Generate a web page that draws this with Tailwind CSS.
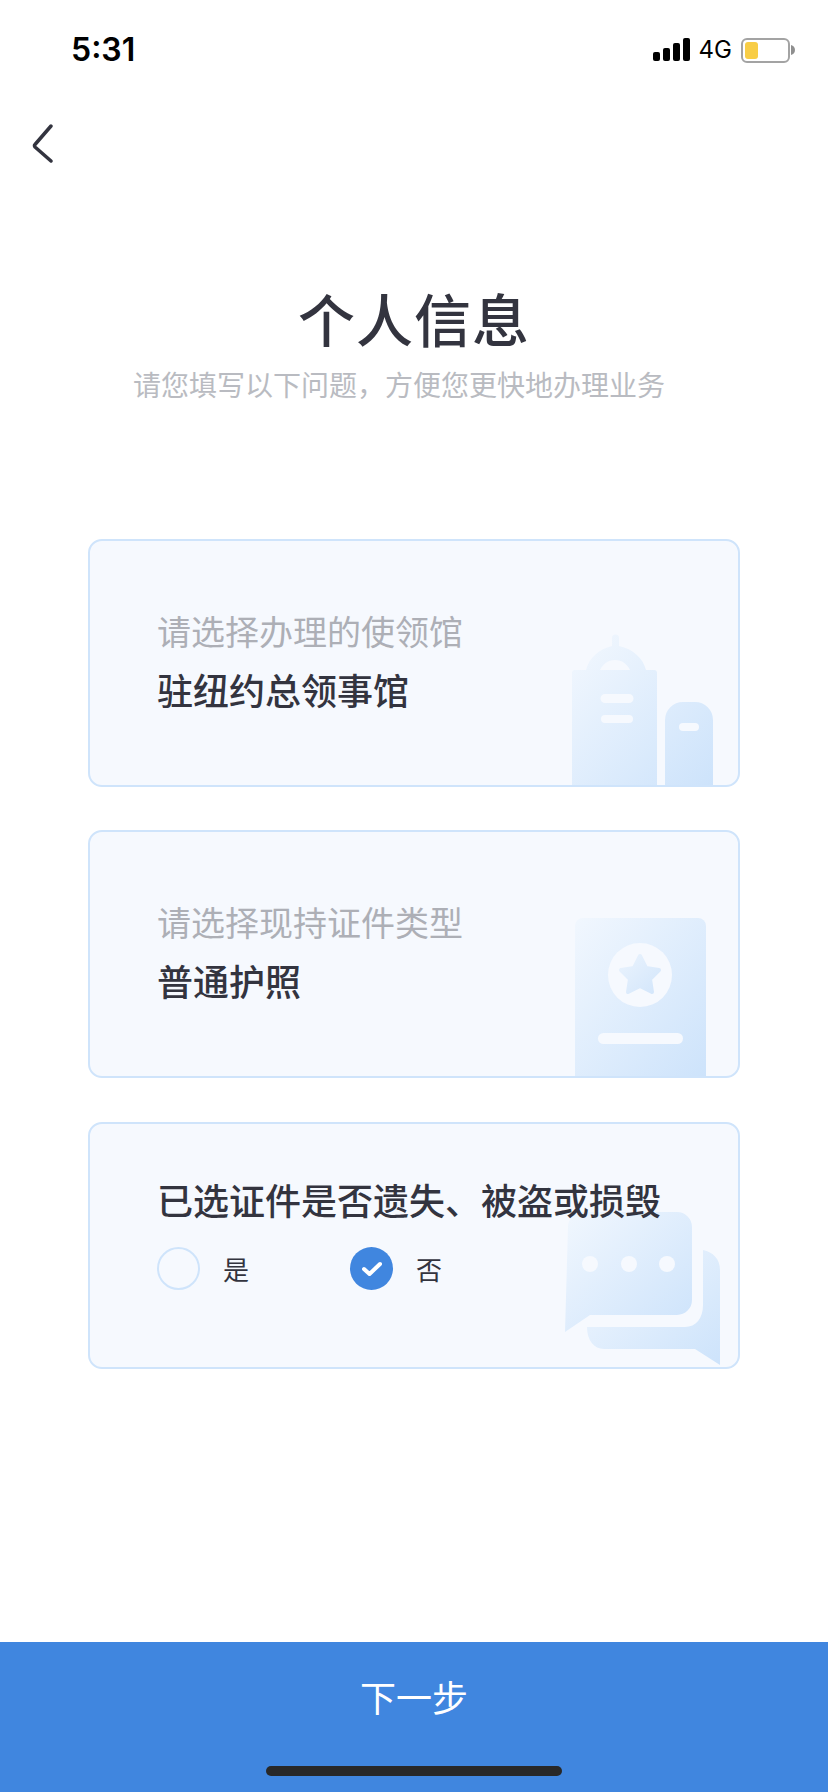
<!DOCTYPE html>
<html lang="zh-CN">
<head>
    <meta charset="UTF-8">
    <meta name="viewport" content="width=device-width, initial-scale=1.0">
    <title>个人信息</title>
    <script src="https://cdn.jsdelivr.net/npm/@tailwindcss/browser@4"></script>
</head>
<body class="bg-white font-['Noto_Sans_CJK_SC','Noto_Sans',sans-serif] text-[#33343f]">

    <main class="flex flex-col w-[828px] h-[1792px] overflow-hidden">

        <!-- 状态栏 -->
        <header class="flex items-center justify-between h-[100px] pl-[71px] pr-[33px] shrink-0">
            <span class="font-['Inter',sans-serif] font-semibold text-[32px] leading-none text-black">5:31</span>
            <div class="flex items-center">
                <svg width="37" height="24" viewBox="0 0 37 24" fill="#000">
                    <rect x="0" y="14" width="7" height="9" rx="2"/>
                    <rect x="10" y="10" width="7" height="13" rx="2"/>
                    <rect x="20" y="5" width="7" height="18" rx="2"/>
                    <rect x="30" y="0" width="7" height="23" rx="2"/>
                </svg>
                <span class="ml-[9px] font-['Inter',sans-serif] text-[24px] leading-none text-black">4G</span>
                <div class="relative ml-[9px] w-[49px] h-[25px] border-2 border-[#a3a3a3] rounded-[6px] p-[2px]">
                    <div class="w-[13px] h-full bg-[#f8cd46] rounded-[3px]"></div>
                </div>
                <svg class="ml-[1px]" width="4" height="10" viewBox="0 0 4 10" fill="#8f8f8f"><path d="M0 0c2.5.6 4 2.6 4 5s-1.500 4.400-4 5z"/></svg>
            </div>
        </header>

        <!-- 返回 -->
        <div class="h-[60px] pl-[30px] pt-[24px] shrink-0">
            <svg width="26" height="40" viewBox="0 0 26 40" fill="none" stroke="#33343f" stroke-width="3.500" stroke-linecap="round" stroke-linejoin="round">
                <path d="M21 2 L5 20.500 Q4 21.500 5 23 L21 37"/>
            </svg>
        </div>

        <!-- 标题 -->
        <section class="text-center mt-[117px] shrink-0">
            <h1 class="text-[57px] leading-[80px] font-medium tracking-[1px]">个人信息</h1>
            <p class="text-[28px] leading-[40px] text-[#b9bbc1] mt-[7px] pr-[30px]">请您填写以下问题&#xFF0C;方便您更快地办理业务</p>
        </section>

        <!-- 表单卡片 -->
        <section class="flex flex-col gap-[43px] mx-[88px] mt-[135px] shrink-0">

            <div class="relative h-[248px] bg-[#f6f9fe] border-2 border-[#cfe4fb] rounded-[14px] pl-[67px] pt-[66px] overflow-hidden">
                <p class="relative text-[34px] leading-[48px] text-[#adafb6]">请选择办理的使领馆</p>
                <p class="relative text-[36px] leading-[50px] font-medium mt-[9px]">驻纽约总领事馆</p>
                <svg class="absolute left-[450px] top-[69px]" width="220" height="190" viewBox="0 0 220 190">
                    <defs>
                        <linearGradient id="g1" x1="0" y1="0" x2="1" y2="1">
                            <stop offset="0" stop-color="#f3f8fe"/>
                            <stop offset="1" stop-color="#cde3fb"/>
                        </linearGradient>
                    </defs>
                    <path fill="url(#g1)" fill-rule="evenodd" d="M72 36 V28 a3.500 3.500 0 0 1 7 0 V36 C93 39 103 48 106 60 H114 a3 3 0 0 1 3 3 V175 H32 V63 a3 3 0 0 1 3 -3 H46 C49 48 59 39 72 36 Z M60 60 H90 C87 54 82 50 75 50 C68 50 63 54 60 60 Z M65 84 a4.500 4.500 0 0 0 0 9 H89 a4.500 4.500 0 0 0 0 -9 Z M65 105 a4 4 0 0 0 0 8 H89 a4 4 0 0 0 0 -8 Z M143 92 H155 a18 18 0 0 1 18 18 V175 H125 V110 a18 18 0 0 1 18 -18 Z M143 113 a4 4 0 0 0 0 8 H155 a4 4 0 0 0 0 -8 Z"/>
                </svg>
            </div>

            <div class="relative h-[248px] bg-[#f6f9fe] border-2 border-[#cfe4fb] rounded-[14px] pl-[67px] pt-[66px] overflow-hidden">
                <p class="relative text-[34px] leading-[48px] text-[#adafb6]">请选择现持证件类型</p>
                <p class="relative text-[36px] leading-[50px] font-medium mt-[9px]">普通护照</p>
                <svg class="absolute left-[450px] top-[68px]" width="220" height="190" viewBox="0 0 220 190">
                    <defs>
                        <linearGradient id="g2" x1="0" y1="0" x2="1" y2="1">
                            <stop offset="0" stop-color="#f1f7fe"/>
                            <stop offset="1" stop-color="#cde3fb"/>
                        </linearGradient>
                        <linearGradient id="g2s" x1="0" y1="0" x2="1" y2="1">
                            <stop offset="0" stop-color="#eaf3fd"/>
                            <stop offset="1" stop-color="#d3e6fb"/>
                        </linearGradient>
                    </defs>
                    <path fill="url(#g2)" d="M43 18 H158 a8 8 0 0 1 8 8 V177 H35 V26 a8 8 0 0 1 8 -8 Z"/>
                    <circle cx="100" cy="75" r="32" fill="#f6f9fe"/>
                    <path fill="url(#g2s)" stroke="url(#g2s)" stroke-width="4" stroke-linejoin="round" d="M100 56 L106 68 L119 70 L110 79 L112 92 L100 86 L88 92 L90 79 L81 70 L94 68 Z"/>
                    <rect x="58" y="133" width="85" height="11" rx="5.500" fill="#f6f9fe"/>
                </svg>
            </div>

            <div class="relative h-[247px] mt-px bg-[#f6f9fe] border-2 border-[#cfe4fb] rounded-[14px] pl-[67px] pt-[50px] overflow-hidden">
                <svg class="absolute left-[450px] top-[66px]" width="220" height="190" viewBox="0 0 220 190">
                    <defs>
                        <linearGradient id="g3" x1="0" y1="0" x2="1" y2="1">
                            <stop offset="0" stop-color="#f1f7fe"/>
                            <stop offset="1" stop-color="#cde3fb"/>
                        </linearGradient>
                    </defs>
                    <path fill="url(#g3)" d="M42 22 H137 a15 15 0 0 1 15 15 V110 a15 15 0 0 1 -15 15 H50 L25 142 L28 37 a15 15 0 0 1 14 -15 Z"/>
                    <path fill="url(#g3)" d="M163 60 C173 62 180 69 180 80 V175 L155 159 H64 C54 159 47 150 47 137 H145 C156 137 163 128 163 115 Z"/>
                    <circle cx="50" cy="74" r="8" fill="#f6f9fe"/>
                    <circle cx="89" cy="74" r="8" fill="#f6f9fe"/>
                    <circle cx="127" cy="74" r="8" fill="#f6f9fe"/>
                </svg>
                <p class="relative text-[36px] leading-[50px] font-medium whitespace-nowrap">已选证件是否遗失、被盗或损毁</p>
                <div class="relative flex items-center mt-[23px]">
                    <span class="w-[43px] h-[43px] rounded-full border-2 border-[#cfe4fb] shrink-0"></span>
                    <span class="ml-[23px] w-[127px] text-[26px] leading-[43px]">是</span>
                    <span class="flex items-center justify-center w-[43px] h-[43px] rounded-full bg-[#4086df] shrink-0">
                        <svg width="22" height="18" viewBox="0 0 22 18" fill="none" stroke="#fff" stroke-width="4" stroke-linecap="round" stroke-linejoin="round"><path d="M3 9 L8.500 14 L19 4"/></svg>
                    </span>
                    <span class="ml-[23px] text-[26px] leading-[43px]">否</span>
                </div>
            </div>
        </section>

        <!-- 底部按钮 -->
        <footer class="relative mt-auto h-[150px] bg-[#4086df] text-white text-center text-[36px] leading-[108px] shrink-0">
            下一步
            <div class="absolute left-[266px] bottom-[16px] w-[296px] h-[10px] rounded-full bg-[#282828]"></div>
        </footer>
    </main>
</body>
</html>
